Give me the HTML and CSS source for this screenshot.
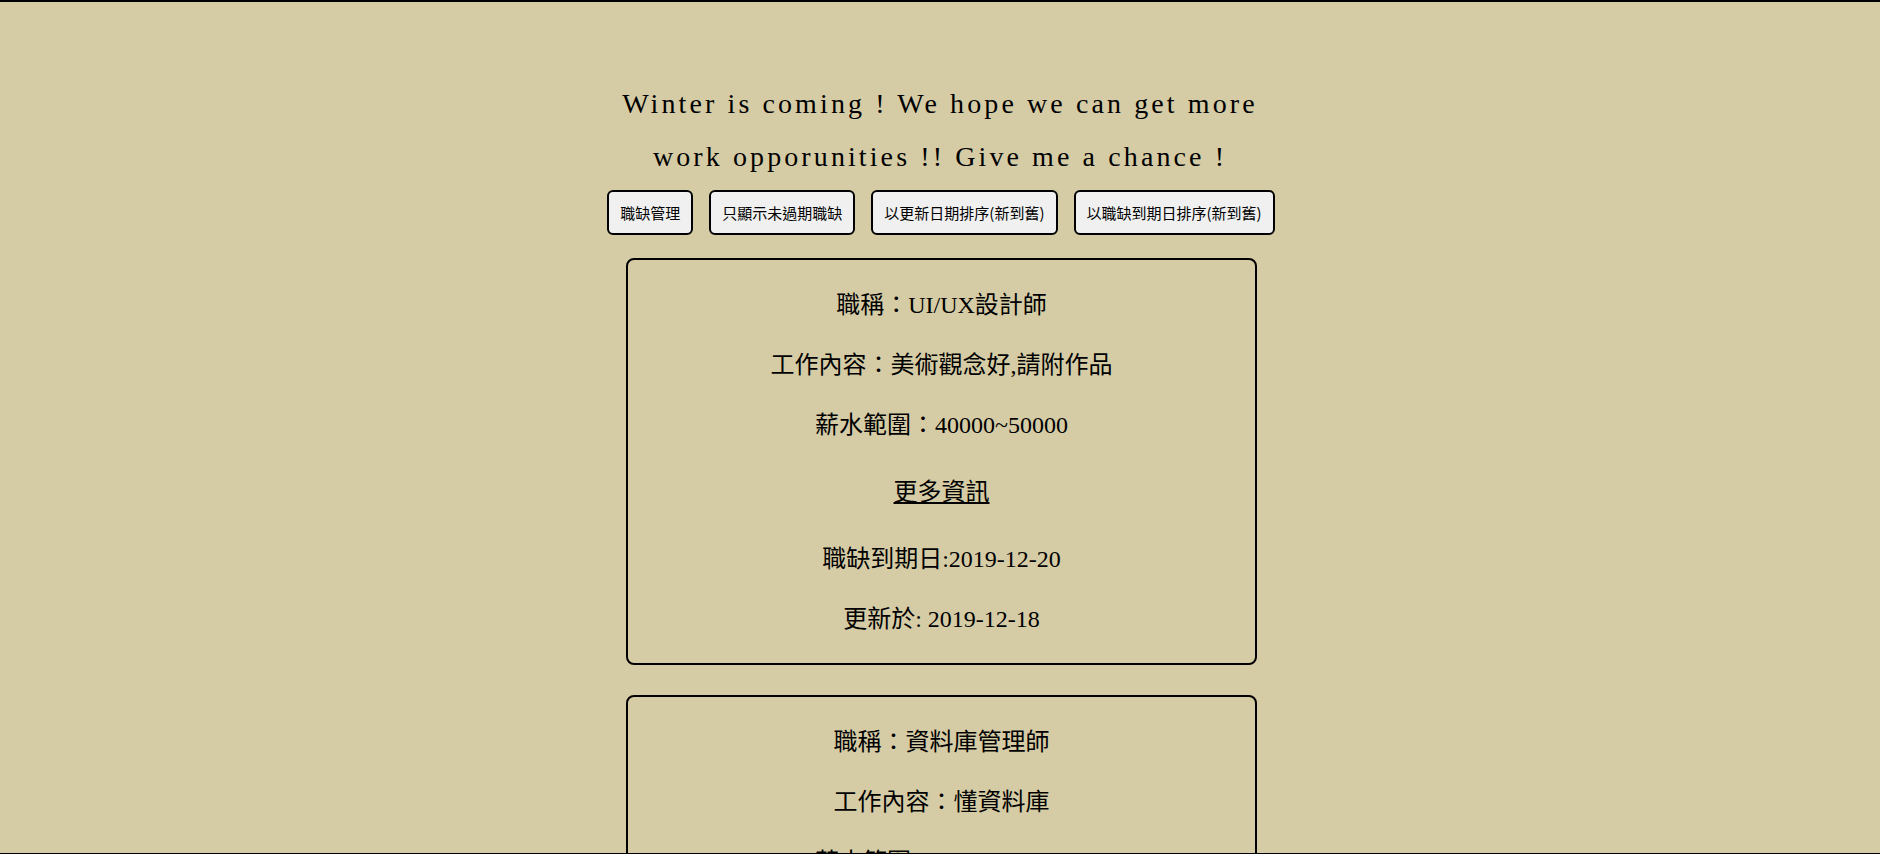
FILE: index.html
```html
<!DOCTYPE html>
<html lang="zh-Hant">
<head>
<meta charset="utf-8">
<title>職缺列表</title>
<link rel="stylesheet" href="styles.css">
</head>
<body>
<header class="hero">
  <h1 class="hero-title">Winter is coming ! We hope we can get more work opporunities !! Give me a chance !</h1>
</header>
<nav class="toolbar">
  <button class="tool-btn" type="button">職缺管理</button>
  <button class="tool-btn" type="button">只顯示未過期職缺</button>
  <button class="tool-btn" type="button">以更新日期排序(新到舊)</button>
  <button class="tool-btn" type="button">以職缺到期日排序(新到舊)</button>
</nav>
<main class="job-list">
  <article class="job-card">
    <p class="job-line">職稱：UI/UX設計師</p>
    <p class="job-line">工作內容：美術觀念好,請附作品</p>
    <p class="job-line">薪水範圍：40000~50000</p>
    <p class="job-more"><a class="more-link" href="#">更多資訊</a></p>
    <p class="job-line">職缺到期日:2019-12-20</p>
    <p class="job-line">更新於: 2019-12-18</p>
  </article>
  <article class="job-card">
    <p class="job-line">職稱：資料庫管理師</p>
    <p class="job-line">工作內容：懂資料庫</p>
    <p class="job-line">薪水範圍：35000~45000</p>
    <p class="job-more"><a class="more-link" href="#">更多資訊</a></p>
    <p class="job-line">職缺到期日:2019-12-25</p>
    <p class="job-line">更新於: 2019-12-17</p>
  </article>
</main>
</body>
</html>
```

FILE: styles.css
```css
html {
  border-top: 2px solid #000;
  background: #d5cca6;
}

body {
  margin: 0;
  background: #d5cca6;
  color: #000;
  font-family: "Liberation Serif", "Noto Sans CJK TC", serif;
}

body::after {
  content: "";
  position: fixed;
  left: 0;
  right: 0;
  bottom: 0;
  height: 1px;
  background: #000;
}

.hero {
  padding-top: 75px;
  display: flex;
  justify-content: center;
}

.hero-title {
  width: 680px;
  margin: 0;
  font-size: 28px;
  font-weight: normal;
  letter-spacing: 3.1px;
  line-height: 53px;
  text-align: center;
}

.toolbar {
  margin-top: 7px;
  padding-left: 2px;
  display: flex;
  justify-content: center;
  gap: 16px;
}

.tool-btn {
  height: 45px;
  padding: 0 11px;
  border: 2px solid #000;
  border-radius: 6px;
  background: #f0f0f0;
  color: #000;
  font-family: "Noto Sans CJK TC", sans-serif;
  font-size: 15px;
  line-height: 21px;
  cursor: pointer;
}

.job-list {
  margin-top: 23px;
  padding-left: 3px;
  display: flex;
  flex-direction: column;
  align-items: center;
  gap: 30px;
  padding-bottom: 40px;
}

.job-card {
  width: 627px;
  border: 2px solid #000;
  border-radius: 8px;
  padding: 3px 0 2px;
  text-align: center;
}

.job-line {
  margin: 24px 0;
  font-size: 24px;
  line-height: 36px;
}

.job-more {
  margin: 31px 0;
  font-size: 24px;
  line-height: 36px;
}

.more-link {
  color: #000;
  text-decoration: underline;
}
```
